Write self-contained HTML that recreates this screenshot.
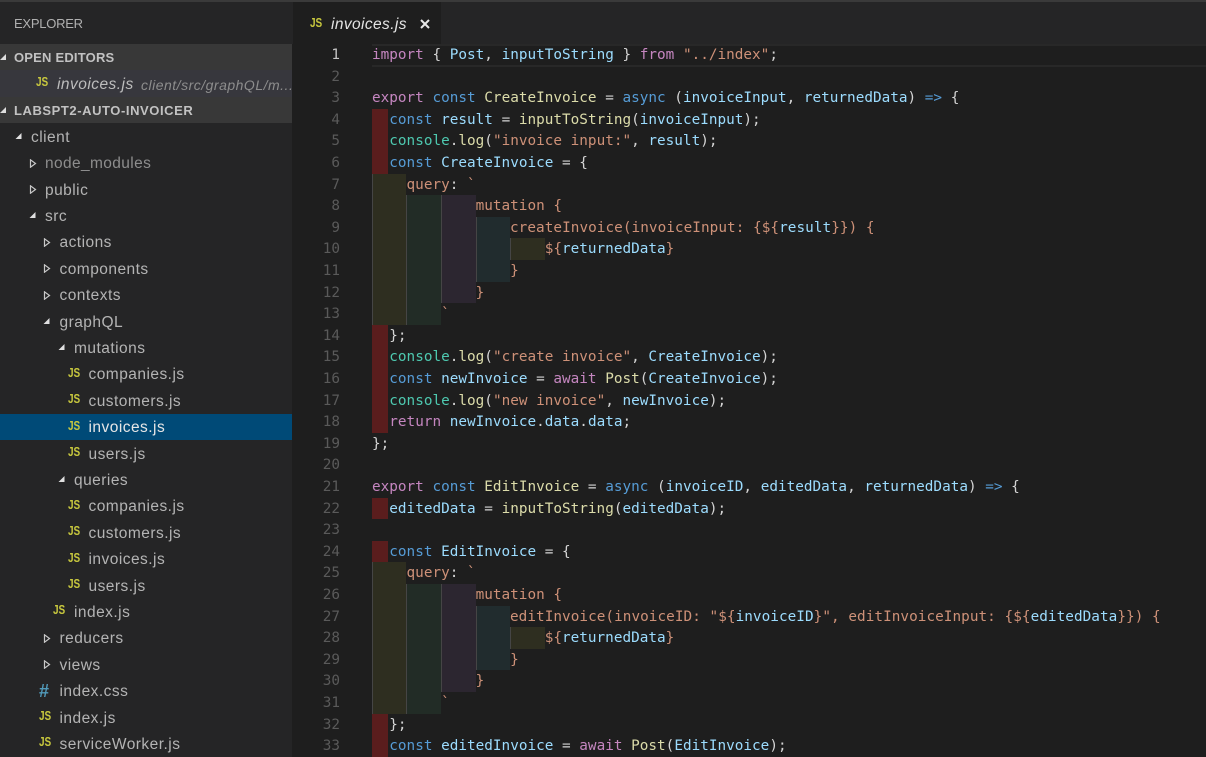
<!DOCTYPE html>
<html><head><meta charset="utf-8">
<style>
html,body{margin:0;padding:0;background:#1e1e1e}
#r{position:relative;width:1206px;height:757px;overflow:hidden;background:#1e1e1e}
#side{position:absolute;left:0;top:0;width:292px;height:757px;background:#252526;font-family:"Liberation Sans",sans-serif;font-size:15.5px;letter-spacing:.47px;color:#b4b4b4}
.top{position:absolute;left:0;top:0;width:1206px;height:2px;background:#3a3a3a;z-index:5}
.t{position:absolute;left:0;width:292px;height:26.4px;line-height:26.4px;white-space:nowrap;overflow:hidden}
.t b,.t i{position:absolute;top:1.5px;font-weight:normal;font-style:normal}
.h{background:#383838;font-weight:bold;font-size:13px;color:#c2c2c2}
.h .l{position:absolute;left:14px;top:1px}
.t b.j,.j{font:bold 12.5px/26.4px "Liberation Sans",sans-serif;color:#c8c83e;letter-spacing:0;transform:scaleX(.8);transform-origin:left center;top:-1px}
svg{position:absolute}
.o{position:absolute;width:9px;height:9px;top:9px}
#tabs{position:absolute;left:292px;top:0;width:914px;height:44px;background:#252526}
#tab{position:absolute;left:1px;top:2px;width:148px;height:42px;background:#1e1e1e}
#ed{position:absolute;left:292px;top:44px;width:914px;height:713px;background:#1e1e1e;font-family:"DejaVu Sans Mono",monospace;font-size:14.35px;color:#d4d4d4}
.b{position:absolute}
.hl{position:absolute;left:80px;top:0;right:0;height:19px;border-top:2px solid #282828;border-bottom:2px solid #282828}
.n{position:absolute;left:0;width:48px;text-align:right;color:#5a5a5a;height:21.6px;line-height:21.6px;transform:translateY(1px)}
.c{position:absolute;left:80px;white-space:pre;height:21.6px;line-height:21.6px;transform:translateY(1px)}
.k{color:#c586c0}.d{color:#569cd6}.f{color:#dcdcaa}.v{color:#9cdcfe}.s{color:#ce9178}.y{color:#4ec9b0}
</style></head><body><div id="r"><div class="top"></div>
<div id="side">
<div class="t" style="top:11px;height:26px;line-height:26px;font-size:13px;letter-spacing:-.25px;color:#b0b0b0"><span style="position:absolute;left:14px">EXPLORER</span></div>

<div class="t h" style="top:44px;letter-spacing:.2px"><svg width="9" height="9" style="left:0;top:9px"><path d="M6 1V7H0Z" fill="#ddd"/></svg><span class="l">OPEN EDITORS</span></div>
<div class="t" style="top:70.4px;background:#37373d"><b class="j" style="left:36px">JS</b><i style="left:57px;font-style:italic;color:#bdbdbd">invoices.js</i><i style="left:141px;font-style:italic;font-size:14px;letter-spacing:.5px;color:#8d8d8d;top:2px">client/src/graphQL/m...</i></div>
<div class="t h" style="top:96.8px;letter-spacing:.57px"><svg width="9" height="9" style="left:0;top:9px"><path d="M6 1V7H0Z" fill="#ddd"/></svg><span class="l">LABSPT2-AUTO-INVOICER</span></div>

<div class="t" style="top:123.2px"><svg class="o" style="left:15px"><path d="M6.5 1V7H.5Z" fill="#e0e0e0"/></svg><b style="left:31px">client</b></div>
<div class="t" style="top:149.6px"><svg class="o" style="left:29px"><path d="M1.5 .8L6.5 4.5L1.5 8.2Z" fill="none" stroke="#c8c8c8" stroke-width="1.2"/></svg><b style="left:45px;color:#8d8d8d;letter-spacing:.38px">node_modules</b></div>
<div class="t" style="top:176px"><svg class="o" style="left:29px"><path d="M1.5 .8L6.5 4.5L1.5 8.2Z" fill="none" stroke="#c8c8c8" stroke-width="1.2"/></svg><b style="left:45px">public</b></div>
<div class="t" style="top:202.4px"><svg class="o" style="left:29px"><path d="M6.5 1V7H.5Z" fill="#e0e0e0"/></svg><b style="left:45px">src</b></div>
<div class="t" style="top:228.8px"><svg class="o" style="left:43px"><path d="M1.5 .8L6.5 4.5L1.5 8.2Z" fill="none" stroke="#c8c8c8" stroke-width="1.2"/></svg><b style="left:59.5px">actions</b></div>
<div class="t" style="top:255.2px"><svg class="o" style="left:43px"><path d="M1.5 .8L6.5 4.5L1.5 8.2Z" fill="none" stroke="#c8c8c8" stroke-width="1.2"/></svg><b style="left:59.5px">components</b></div>
<div class="t" style="top:281.6px"><svg class="o" style="left:43px"><path d="M1.5 .8L6.5 4.5L1.5 8.2Z" fill="none" stroke="#c8c8c8" stroke-width="1.2"/></svg><b style="left:59.5px">contexts</b></div>
<div class="t" style="top:308px"><svg class="o" style="left:43px"><path d="M6.5 1V7H.5Z" fill="#e0e0e0"/></svg><b style="left:59.5px">graphQL</b></div>
<div class="t" style="top:334.4px"><svg class="o" style="left:58px"><path d="M6.5 1V7H.5Z" fill="#e0e0e0"/></svg><b style="left:74px">mutations</b></div>
<div class="t" style="top:360.8px"><b class="j" style="left:68px">JS</b><b style="left:88.5px">companies.js</b></div>
<div class="t" style="top:387.2px"><b class="j" style="left:68px">JS</b><b style="left:88.5px">customers.js</b></div>
<div class="t" style="top:413.6px;background:#004a77"><b class="j" style="left:68px">JS</b><b style="left:88.5px;color:#e6e6e6">invoices.js</b></div>
<div class="t" style="top:440px"><b class="j" style="left:68px">JS</b><b style="left:88.5px">users.js</b></div>
<div class="t" style="top:466.4px"><svg class="o" style="left:58px"><path d="M6.5 1V7H.5Z" fill="#e0e0e0"/></svg><b style="left:74px">queries</b></div>
<div class="t" style="top:492.8px"><b class="j" style="left:68px">JS</b><b style="left:88.5px">companies.js</b></div>
<div class="t" style="top:519.2px"><b class="j" style="left:68px">JS</b><b style="left:88.5px">customers.js</b></div>
<div class="t" style="top:545.6px"><b class="j" style="left:68px">JS</b><b style="left:88.5px">invoices.js</b></div>
<div class="t" style="top:572px"><b class="j" style="left:68px">JS</b><b style="left:88.5px">users.js</b></div>
<div class="t" style="top:598.4px"><b class="j" style="left:53px">JS</b><b style="left:74px">index.js</b></div>
<div class="t" style="top:624.8px"><svg class="o" style="left:43px"><path d="M1.5 .8L6.5 4.5L1.5 8.2Z" fill="none" stroke="#c8c8c8" stroke-width="1.2"/></svg><b style="left:59.5px">reducers</b></div>
<div class="t" style="top:651.2px"><svg class="o" style="left:43px"><path d="M1.5 .8L6.5 4.5L1.5 8.2Z" fill="none" stroke="#c8c8c8" stroke-width="1.2"/></svg><b style="left:59.5px">views</b></div>
<div class="t" style="top:677.6px"><b style="left:39px;top:0;font-weight:bold;font-size:18px;letter-spacing:0;color:#519aba">#</b><b style="left:59.5px">index.css</b></div>
<div class="t" style="top:704px"><b class="j" style="left:39px">JS</b><b style="left:59.5px">index.js</b></div>
<div class="t" style="top:730.4px"><b class="j" style="left:39px">JS</b><b style="left:59.5px">serviceWorker.js</b></div>
</div>

<div id="tabs"><div id="tab">
<span class="j" style="position:absolute;left:17px;top:0;line-height:42px">JS</span>
<span style="position:absolute;left:38px;top:2px;font:italic 15.5px/42px 'Liberation Sans',sans-serif;letter-spacing:.4px;color:#e4e4e4">invoices.js</span>
<svg width="10" height="10" style="left:127px;top:17px"><path d="M1 1L9 9M9 1L1 9" stroke="#e8e8e8" stroke-width="2"/></svg>
</div></div>

<div id="ed">
<div class="hl"></div>
<div class="b" style="left:80px;top:64.8px;width:16px;height:64.8px;background:#5a1d1d"></div>
<div class="b" style="left:80px;top:280.8px;width:16px;height:108px;background:#5a1d1d"></div>
<div class="b" style="left:80px;top:453.6px;width:16px;height:21.6px;background:#5a1d1d"></div>
<div class="b" style="left:80px;top:496.8px;width:16px;height:21.6px;background:#5a1d1d"></div>
<div class="b" style="left:80px;top:669.6px;width:16px;height:43.4px;background:#5a1d1d"></div>

<div class="b" style="left:80px;top:129.6px;width:34px;height:151.2px;background:#2e2e20;border-left:1px solid #454545;box-sizing:border-box"></div>
<div class="b" style="left:114px;top:151.2px;width:35px;height:129.6px;background:#222c26;border-left:1px solid #454545;box-sizing:border-box"></div>
<div class="b" style="left:149px;top:151.2px;width:35px;height:108px;background:#2c2630;border-left:1px solid #454545;box-sizing:border-box"></div>
<div class="b" style="left:184px;top:172.8px;width:34px;height:64.8px;background:#212c2e;border-left:1px solid #454545;box-sizing:border-box"></div>
<div class="b" style="left:218px;top:194.4px;width:35px;height:21.6px;background:#2e2e20;border-left:1px solid #454545;box-sizing:border-box"></div>

<div class="b" style="left:80px;top:518.4px;width:34px;height:151.2px;background:#2e2e20;border-left:1px solid #454545;box-sizing:border-box"></div>
<div class="b" style="left:114px;top:540px;width:35px;height:129.6px;background:#222c26;border-left:1px solid #454545;box-sizing:border-box"></div>
<div class="b" style="left:149px;top:540px;width:35px;height:108px;background:#2c2630;border-left:1px solid #454545;box-sizing:border-box"></div>
<div class="b" style="left:184px;top:561.6px;width:34px;height:64.8px;background:#212c2e;border-left:1px solid #454545;box-sizing:border-box"></div>
<div class="b" style="left:218px;top:583.2px;width:35px;height:21.6px;background:#2e2e20;border-left:1px solid #454545;box-sizing:border-box"></div>

<div class="n" style="top:0;color:#c6c6c6">1</div><div class="c" style="top:0"><span class="k">import</span> { <span class="v">Post</span>, <span class="v">inputToString</span> } <span class="k">from</span> <span class="s">"../index"</span>;</div>
<div class="n" style="top:21.6px">2</div>
<div class="n" style="top:43.2px">3</div><div class="c" style="top:43.2px"><span class="k">export</span> <span class="d">const</span> <span class="f">CreateInvoice</span> = <span class="d">async</span> (<span class="v">invoiceInput</span>, <span class="v">returnedData</span>) <span class="d">=&gt;</span> {</div>
<div class="n" style="top:64.8px">4</div><div class="c" style="top:64.8px">  <span class="d">const</span> <span class="v">result</span> = <span class="f">inputToString</span>(<span class="v">invoiceInput</span>);</div>
<div class="n" style="top:86.4px">5</div><div class="c" style="top:86.4px">  <span class="y">console</span>.<span class="f">log</span>(<span class="s">"invoice input:"</span>, <span class="v">result</span>);</div>
<div class="n" style="top:108px">6</div><div class="c" style="top:108px">  <span class="d">const</span> <span class="v">CreateInvoice</span> = {</div>
<div class="n" style="top:129.6px">7</div><div class="c s" style="top:129.6px">    query<span style="color:#d4d4d4">:</span> `</div>
<div class="n" style="top:151.2px">8</div><div class="c s" style="top:151.2px">            mutation {</div>
<div class="n" style="top:172.8px">9</div><div class="c s" style="top:172.8px;left:218px;letter-spacing:.045px">createInvoice(invoiceInput: {${<span class="v">result</span>}}) {</div>
<div class="n" style="top:194.4px">10</div><div class="c s" style="top:194.4px">                    ${<span class="v">returnedData</span>}</div>
<div class="n" style="top:216px">11</div><div class="c s" style="top:216px">                }</div>
<div class="n" style="top:237.6px">12</div><div class="c s" style="top:237.6px">            }</div>
<div class="n" style="top:259.2px">13</div><div class="c s" style="top:259.2px">        `</div>
<div class="n" style="top:280.8px">14</div><div class="c" style="top:280.8px">  };</div>
<div class="n" style="top:302.4px">15</div><div class="c" style="top:302.4px">  <span class="y">console</span>.<span class="f">log</span>(<span class="s">"create invoice"</span>, <span class="v">CreateInvoice</span>);</div>
<div class="n" style="top:324px">16</div><div class="c" style="top:324px">  <span class="d">const</span> <span class="v">newInvoice</span> = <span class="k">await</span> <span class="f">Post</span>(<span class="v">CreateInvoice</span>);</div>
<div class="n" style="top:345.6px">17</div><div class="c" style="top:345.6px">  <span class="y">console</span>.<span class="f">log</span>(<span class="s">"new invoice"</span>, <span class="v">newInvoice</span>);</div>
<div class="n" style="top:367.2px">18</div><div class="c" style="top:367.2px">  <span class="k">return</span> <span class="v">newInvoice</span>.<span class="v">data</span>.<span class="v">data</span>;</div>
<div class="n" style="top:388.8px">19</div><div class="c" style="top:388.8px">};</div>
<div class="n" style="top:410.4px">20</div>
<div class="n" style="top:432px">21</div><div class="c" style="top:432px"><span class="k">export</span> <span class="d">const</span> <span class="f">EditInvoice</span> = <span class="d">async</span> (<span class="v">invoiceID</span>, <span class="v">editedData</span>, <span class="v">returnedData</span>) <span class="d">=&gt;</span> {</div>
<div class="n" style="top:453.6px">22</div><div class="c" style="top:453.6px">  <span class="v">editedData</span> = <span class="f">inputToString</span>(<span class="v">editedData</span>);</div>
<div class="n" style="top:475.2px">23</div>
<div class="n" style="top:496.8px">24</div><div class="c" style="top:496.8px">  <span class="d">const</span> <span class="v">EditInvoice</span> = {</div>
<div class="n" style="top:518.4px">25</div><div class="c s" style="top:518.4px">    query<span style="color:#d4d4d4">:</span> `</div>
<div class="n" style="top:540px">26</div><div class="c s" style="top:540px">            mutation {</div>
<div class="n" style="top:561.6px">27</div><div class="c s" style="top:561.6px;left:218px;letter-spacing:.04px">editInvoice(invoiceID: "${<span class="v">invoiceID</span>}", editInvoiceInput: {${<span class="v">editedData</span>}}) {</div>
<div class="n" style="top:583.2px">28</div><div class="c s" style="top:583.2px">                    ${<span class="v">returnedData</span>}</div>
<div class="n" style="top:604.8px">29</div><div class="c s" style="top:604.8px">                }</div>
<div class="n" style="top:626.4px">30</div><div class="c s" style="top:626.4px">            }</div>
<div class="n" style="top:648px">31</div><div class="c s" style="top:648px">        `</div>
<div class="n" style="top:669.6px">32</div><div class="c" style="top:669.6px">  };</div>
<div class="n" style="top:691.2px">33</div><div class="c" style="top:691.2px">  <span class="d">const</span> <span class="v">editedInvoice</span> = <span class="k">await</span> <span class="f">Post</span>(<span class="v">EditInvoice</span>);</div>
</div>
</div></body></html>
